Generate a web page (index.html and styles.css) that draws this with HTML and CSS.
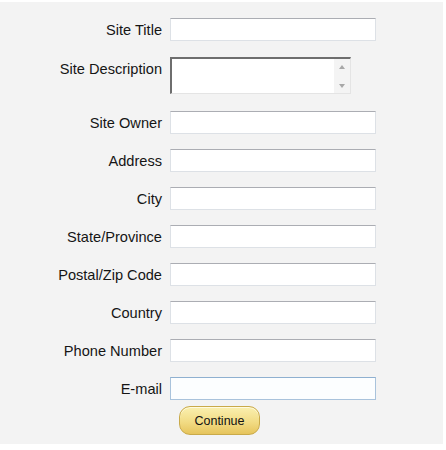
FILE: index.html
```html
<!DOCTYPE html>
<html lang="en">
<head>
<meta charset="utf-8">
<title>Site Setup</title>
<link rel="stylesheet" href="styles.css">
</head>
<body>
	<div class="page">
		<form class="setup">
			<div class="row">
				<label for="title">Site Title</label>
				<input type="text" id="title" class="field">
			</div>
			<div class="row row-desc">
				<label for="desc">Site Description</label>
				<div class="memo">
					<textarea id="desc"></textarea>
					<div class="scroll">
						<span class="arrow up"></span>
						<span class="arrow down"></span>
					</div>
				</div>
			</div>
			<div class="row">
				<label for="owner">Site Owner</label>
				<input type="text" id="owner" class="field">
			</div>
			<div class="row">
				<label for="addr">Address</label>
				<input type="text" id="addr" class="field">
			</div>
			<div class="row">
				<label for="city">City</label>
				<input type="text" id="city" class="field">
			</div>
			<div class="row">
				<label for="state">State/Province</label>
				<input type="text" id="state" class="field">
			</div>
			<div class="row">
				<label for="zip">Postal/Zip Code</label>
				<input type="text" id="zip" class="field">
			</div>
			<div class="row">
				<label for="country">Country</label>
				<input type="text" id="country" class="field">
			</div>
			<div class="row">
				<label for="phone">Phone Number</label>
				<input type="text" id="phone" class="field">
			</div>
			<div class="row">
				<label for="email">E-mail</label>
				<input type="text" id="email" class="field active">
			</div>
			<div class="actions">
				<button type="button" class="continue">Continue</button>
			</div>
		</form>
	</div>
</body>
</html>
```

FILE: styles.css
```css
* { margin: 0; padding: 0; box-sizing: border-box; }
body { background: #fff; padding-top: 2px; font-family: "Liberation Sans", Arial, sans-serif; }

.page { width: 443px; height: 442px; background: #f3f3f3; padding-top: 16px; }

.setup { display: flex; flex-direction: column; gap: 15px; }
.row { display: grid; grid-template-columns: 162px auto; column-gap: 8px; align-items: start; }
.row-desc { margin: 1px 0 2px; }
.row label { text-align: right; font-size: 14.6px; line-height: 22px; padding-top: 1px; color: #151515; }

.field { width: 206px; height: 23px; border: 1px solid #dde1e6; border-top-color: #abadb3; background: #fff; font-size: 13px; padding: 0 3px; outline: none; }
.field.active { border-color: #a9c3dc; border-top-color: #8fb0d0; background: #fcfeff; }

.memo { display: flex; width: 181px; height: 37px; background: #fff; border-top: 2px solid #6e6e6e; border-left: 2px solid #6e6e6e; border-right: 1px solid #e4e4e4; border-bottom: 1px solid #e4e4e4; }
.memo textarea { flex: 1; border: none; resize: none; overflow: hidden; outline: none; font-size: 13px; }
.scroll { width: 16px; background: #f4f4f4; display: flex; flex-direction: column; justify-content: space-between; align-items: center; padding: 6px 0 5px; }
.arrow { width: 0; height: 0; border-left: 3.5px solid transparent; border-right: 3.5px solid transparent; }
.arrow.up { border-bottom: 4px solid #a8a8a8; }
.arrow.down { border-top: 4px solid #a8a8a8; }

.actions { margin-top: -9px; padding-left: 179px; }
.continue { width: 81px; height: 29px; border-radius: 11px; border: 1px solid #c9aa4a; background: linear-gradient(#faf0b0, #f2dc85 55%, #e6c45c); font-family: "Liberation Sans", Arial, sans-serif; font-size: 12.5px; color: #111; box-shadow: inset 0 1px 0 #fffbe0; }
```
